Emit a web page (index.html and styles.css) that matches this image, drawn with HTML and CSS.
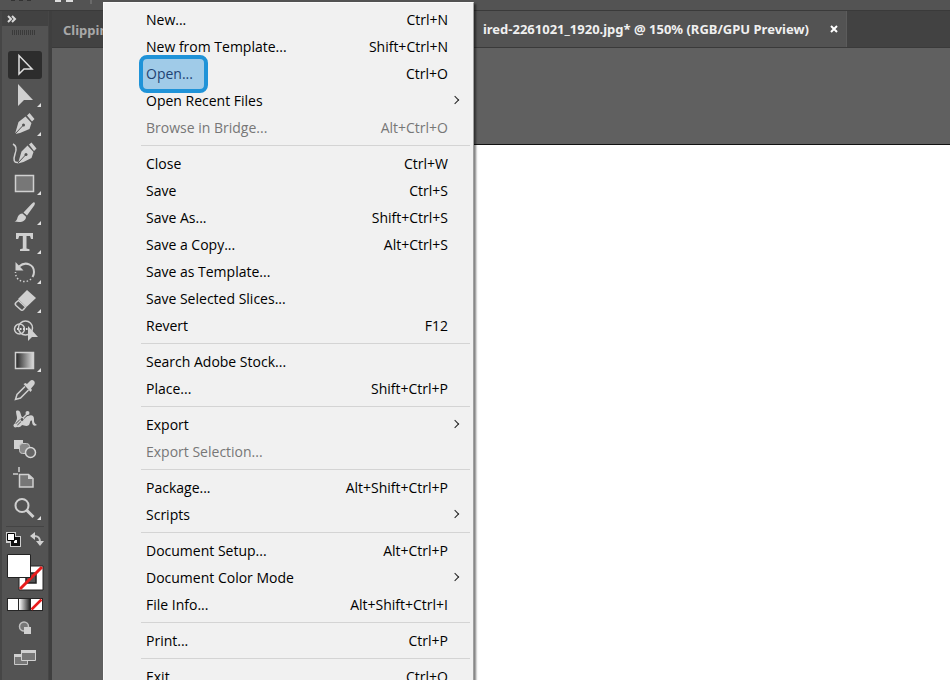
FILE: index.html
```html
<!DOCTYPE html>
<html lang="en">
<head>
	<meta charset="UTF-8">
	<meta name="viewport" content="width=device-width, initial-scale=1.0">
	<title>File menu</title>
	<link rel="stylesheet" href="styles.css">
</head>
<body>
	<header class="topbar">
		<svg class="topmarks" width="130" height="11" viewBox="0 0 130 11">
			<path d="M11 0h4M19 0h4M27 0h4" stroke="#333" stroke-width="2"/>
			<path d="M55 0h6v2h-6zM66 0h7v2h-7z" fill="#ddd"/>
			<path d="M91 0v4" stroke="#6a6a6a" stroke-width="2"/>
		</svg>
	</header>

	<div class="workspace">
		<aside class="toolbar">
			<button class="collapse" aria-label="Expand toolbar">
				<svg width="10" height="8" viewBox="0 0 10 8"><path d="M1 1l3 3-3 3M5 1l3 3-3 3" fill="none" stroke="#d8d8d8" stroke-width="2"/></svg>
			</button>
			<div class="grip"></div>

			<div class="tools">
				<button class="tool selected" aria-label="Selection">
					<svg viewBox="0 0 34 28"><path d="M11 4.500V23l5-5h8z" fill="none" stroke="#e0e0e0" stroke-width="1.500"/></svg>
				</button>
				<button class="tool more" aria-label="Direct selection">
					<svg viewBox="0 0 34 28"><path d="M10 3v22l6-6h9z" class="fill"/></svg>
				</button>
				<button class="tool more" aria-label="Pen">
					<svg viewBox="0 0 34 28"><path d="M19 5.500l2.500-2.500 5 6-2.500 2.500zM17.500 6.500l6 6.500-2 6-9.500 4-5 1 3.500-12z" class="fill"/><path d="M7 24l8-8.500" stroke="#535353"/><circle cx="15.500" cy="15" r="1.500" fill="#535353"/></svg>
				</button>
				<button class="tool" aria-label="Curvature">
					<svg viewBox="0 0 34 28"><path d="M21 4.500L23.500 2.500l5 6-2.500 2.500zM19.500 5.500l6 6.500-2 6-8 4-5.500 1.500 3.500-12z" class="fill"/><path d="M10 23l7.500-8" stroke="#535353"/><circle cx="18" cy="14.500" r="1.500" fill="#535353"/><path d="M5 4c4 2 4 5 2 10-2 6-1 9 3 8.500" class="line"/></svg>
				</button>
				<button class="tool more" aria-label="Rectangle">
					<svg viewBox="0 0 34 28"><path d="M7.500 6.500h18v16h-18z" fill="#777" stroke="#d0d0d0" stroke-width="1.500"/></svg>
				</button>
				<button class="tool more" aria-label="Paintbrush">
					<svg viewBox="0 0 34 28"><path d="M26.500 3.500c1 1 0 2.500-1 4l-6.500 9-3.500-3 8-8.500c1-1 2-2.500 3-1.500zM14.500 14.500l3.500 3.200c0 4-4 6.300-11.500 4.800 2-.5 2.500-2 3-4s2.500-4 5-4z" class="fill"/></svg>
				</button>
				<button class="tool more" aria-label="Type">
					<svg viewBox="0 0 34 28"><path d="M8 5h17v6h-2l-1-3h-3.500v12.500l3 .8V23H12v-1.700l2.800-.8V8H11.200l-1 3H8z" class="fill"/></svg>
				</button>
				<button class="tool more" aria-label="Rotate">
					<svg viewBox="0 0 34 28"><path d="M11 8.500c7-6 15-1.500 15 5.500 0 2-.5 3.500-1.500 5" fill="none" stroke="#d0d0d0" stroke-width="2"/><path d="M23 21c-4 4-11 3-13.500-.5C8 18.500 7.500 17 7.500 14" fill="none" stroke="#d0d0d0" stroke-width="1.500" stroke-dasharray="1.500 2"/><path d="M7.500 4v8.500h8z" class="fill"/></svg>
				</button>
				<button class="tool more" aria-label="Eraser">
					<svg viewBox="0 0 34 28"><path d="M19 3l9 8-9.500 9L10 12z" class="fill"/><path d="M10.500 13.500l7 6.500-2 2.500c-1 1-2 1-3 0L8 18.500c-1-1-1-2 0-3z" class="line"/></svg>
				</button>
				<button class="tool" aria-label="Shape builder">
					<svg viewBox="0 0 34 28"><circle cx="17.500" cy="11" r="7" class="line"/><circle cx="11.500" cy="12" r="5" class="line"/><path d="M9 12h11" fill="none" stroke="#ddd" stroke-width="2" stroke-dasharray="1.500 1.500"/><path d="M20 9v15l4-4h6z" class="fill"/></svg>
				</button>
				<button class="tool more" aria-label="Gradient">
					<svg viewBox="0 0 34 28"><defs><linearGradient id="ramp"><stop offset="0" stop-color="#222"/><stop offset="1" stop-color="#ddd"/></linearGradient></defs><path d="M7.500 6.500h18v16h-18z" fill="url(#ramp)" stroke="#d0d0d0" stroke-width="1.500"/></svg>
				</button>
				<button class="tool" aria-label="Eyedropper">
					<svg viewBox="0 0 34 28"><path d="M17 10.500l-8 8-1.500 5 5-1.500 8-8" class="line"/><path d="M15.500 8l2-1 1.500 1 3-3c1.500-1.500 3-1 4 0s1 2.500 0 4l-3 3.500 1 1.500-1.500 2z" class="fill"/></svg>
				</button>
				<button class="tool" aria-label="Puppet warp">
					<svg viewBox="0 0 34 28"><path d="M8 6c5-2 4 3 6 6 2 2 3-1 6-1 4-2 6 0 6 3s0 4 3 6c-4 2-5-1-5-4-2-2-2 3-3 4-3 2-5 0-7 0-2 3-6 3-7 0-1-2 2-4 2-7 0-2-1-4-1-7z" class="fill"/><path d="M8 20L20 8" stroke="#535353" stroke-width="3"/><path d="M7 21L20 8" class="line"/><circle cx="14" cy="14.500" r="2" fill="#535353" stroke="#d0d0d0"/><circle cx="7.500" cy="20.500" r="2" class="fill"/><circle cx="19.500" cy="8" r="2" class="fill"/></svg>
				</button>
				<button class="tool" aria-label="Blend">
					<svg viewBox="0 0 34 28"><path d="M6 5h9v9H6z" class="fill"/><rect x="11.500" y="8.500" width="10" height="10" rx="3" fill="#888" stroke="#c8c8c8"/><circle cx="22.500" cy="17.500" r="5" fill="#666" stroke="#d8d8d8" stroke-width="1.500"/></svg>
				</button>
				<button class="tool" aria-label="Artboard">
					<svg viewBox="0 0 34 28"><path d="M11 3v5M5 10h5" class="line"/><path d="M11.500 10.500h9l4.500 4v8.500H11.500z" fill="#777" stroke="#d0d0d0" stroke-width="1.500"/><path d="M20 10v5h5z" class="fill"/></svg>
				</button>
				<button class="tool more" aria-label="Zoom">
					<svg viewBox="0 0 34 28"><circle cx="14" cy="11.500" r="6.500" fill="none" stroke="#d0d0d0" stroke-width="2"/><path d="M18.500 16l7 7" stroke="#d0d0d0" stroke-width="3"/></svg>
				</button>
			</div>

			<div class="colors">
				<div class="color-row">
					<button aria-label="Default fill and stroke">
						<svg width="15" height="15" viewBox="0 0 15 15"><path d="M0 0h10v4h5v11H4v-4H0z" fill="#d0d0d0"/><path d="M5 5h9v9H5z" fill="#111"/><path d="M8 8h3v3H8z" fill="#fff"/><path d="M1.500 1.500h7v7h-7z" fill="#fff" stroke="#000"/></svg>
					</button>
					<button aria-label="Swap fill and stroke">
						<svg width="14" height="15" viewBox="0 0 14 15"><path d="M4 4c4 0 6 1 6 6" fill="none" stroke="#c8c8c8" stroke-width="2"/><path d="M0 4l5-4v8zM6 9h8l-4 5z" class="fill"/></svg>
					</button>
				</div>
				<button class="swatches" aria-label="Fill and stroke">
					<svg width="38" height="38" viewBox="0 0 38 38"><path d="M13 13h24v24H13z" fill="#fff" stroke="#222"/><path d="M20 20h10v10H20z" fill="#535353" stroke="#222" stroke-width="1.500"/><path d="M14 36l22-22" stroke="#e81c1c" stroke-width="3"/><path d="M1.500 1.500h23v23h-23z" fill="#fff" stroke="#222"/></svg>
				</button>
				<button class="modes" aria-label="Color, gradient, none">
					<svg width="36" height="13" viewBox="0 0 36 13"><defs><linearGradient id="fade"><stop offset="0" stop-color="#fff"/><stop offset="1" stop-color="#222"/></linearGradient></defs><path d="M0 0h36v13H0z" fill="#262626"/><path d="M1 1h10v11H1z" fill="#fff"/><path d="M12 1h11v11H12z" fill="url(#fade)"/><path d="M24 1h11v11H24z" fill="#fff"/><path d="M24.500 11.500l10-10" stroke="#e81c1c" stroke-width="2.500"/></svg>
				</button>
				<button class="drawmode" aria-label="Drawing mode">
					<svg width="14" height="14" viewBox="0 0 14 14"><circle cx="6" cy="5.500" r="4.500" fill="#777" stroke="#c0c0c0" stroke-width="1.500"/><path d="M6 6h7v7H6z" class="fill"/></svg>
				</button>
				<button class="screenmode" aria-label="Screen mode">
					<svg width="24" height="18" viewBox="0 0 24 18"><path d="M1.500 5.500h13v10h-13z" fill="#777" stroke="#c8c8c8"/><path d="M1 5h14v3H1z" class="fill"/><path d="M8.500 1.500h14v10h-14z" fill="#777" stroke="#d0d0d0"/><path d="M8 1h15v3H8z" class="fill"/></svg>
				</button>
			</div>
		</aside>

		<main class="document">
			<div class="tabs">
				<div class="tab">Clipping</div>
				<div class="tab active">
					<span>ired-2261021_1920.jpg* @ 150% (RGB/GPU Preview)</span>
					<button class="close" aria-label="Close tab">
						<svg width="8" height="8" viewBox="0 0 8 8"><path d="M1 1l6 6M7 1L1 7" stroke="#fff" stroke-width="2"/></svg>
					</button>
				</div>
			</div>
			<div class="canvas">
				<div class="artboard"></div>
			</div>
		</main>
	</div>

	<nav class="menu" aria-label="File">
		<button class="item"><span>New...</span><kbd>Ctrl+N</kbd></button>
		<button class="item"><span>New from Template...</span><kbd>Shift+Ctrl+N</kbd></button>
		<button class="item marked"><span>Open...</span><kbd>Ctrl+O</kbd></button>
		<button class="item sub"><span>Open Recent Files</span></button>
		<button class="item" disabled><span>Browse in Bridge...</span><kbd>Alt+Ctrl+O</kbd></button>
		<hr>
		<button class="item"><span>Close</span><kbd>Ctrl+W</kbd></button>
		<button class="item"><span>Save</span><kbd>Ctrl+S</kbd></button>
		<button class="item"><span>Save As...</span><kbd>Shift+Ctrl+S</kbd></button>
		<button class="item"><span>Save a Copy...</span><kbd>Alt+Ctrl+S</kbd></button>
		<button class="item"><span>Save as Template...</span></button>
		<button class="item"><span>Save Selected Slices...</span></button>
		<button class="item"><span>Revert</span><kbd>F12</kbd></button>
		<hr>
		<button class="item"><span>Search Adobe Stock...</span></button>
		<button class="item"><span>Place...</span><kbd>Shift+Ctrl+P</kbd></button>
		<hr>
		<button class="item sub"><span>Export</span></button>
		<button class="item" disabled><span>Export Selection...</span></button>
		<hr>
		<button class="item"><span>Package...</span><kbd>Alt+Shift+Ctrl+P</kbd></button>
		<button class="item sub"><span>Scripts</span></button>
		<hr>
		<button class="item"><span>Document Setup...</span><kbd>Alt+Ctrl+P</kbd></button>
		<button class="item sub"><span>Document Color Mode</span></button>
		<button class="item"><span>File Info...</span><kbd>Alt+Shift+Ctrl+I</kbd></button>
		<hr>
		<button class="item"><span>Print...</span><kbd>Ctrl+P</kbd></button>
		<hr>
		<button class="item"><span>Exit</span><kbd>Ctrl+Q</kbd></button>
	</nav>
</body>
</html>
```

FILE: styles.css
```css
*, *::before, *::after{
	box-sizing: border-box;
}
body{
	margin: 0;
	height: 100vh;
	overflow: hidden;
	display: flex;
	flex-direction: column;
	position: relative;
	background: #3f3f3f;
	font-family: "Open Sans", "Noto Sans", sans-serif;
	font-size: 14px;
}
button{
	padding: 0;
	border: 0;
	background: none;
	font: inherit;
	color: inherit;
}
svg{
	display: block;
}
.fill{
	fill: #d0d0d0;
}
.line{
	fill: none;
	stroke: #d0d0d0;
	stroke-width: 1.5;
}
.topbar{
	flex: none;
	height: 11px;
	background: #535353;
	border-bottom: 1px solid #3a3a3a;
}
.workspace{
	flex: 1;
	display: flex;
	gap: 3px;
	min-height: 0;
}

/* tools */
.toolbar{
	flex: none;
	width: 49px;
	background: #535353;
	border-left: 2px solid #464646;
	border-right: 1px solid #464646;
}
.collapse{
	display: block;
	width: 100%;
	height: 15px;
	padding-left: 5px;
	background: #424242;
}
.grip{
	width: 24px;
	height: 5px;
	margin: 4px 10px 16px;
	background: repeating-linear-gradient(to right, #3a3a3a 0 1px, #535353 1px 2px);
}
.tools{
	display: grid;
	grid-template-rows: repeat(8, 30px 29px);
	padding: 0 6px;
}
.tool{
	position: relative;
	width: 34px;
	height: 28px;
	border-radius: 3px;
}
.tool svg{
	width: 34px;
	height: 28px;
}
.selected{
	background: #2d2d2d;
}
.more::after{
	content: "";
	position: absolute;
	right: 1px;
	bottom: 2px;
	border-left: 4px solid transparent;
	border-bottom: 4px solid #e0e0e0;
}
.colors{
	margin: 3px 4px 0;
	padding-top: 5px;
	border-top: 1px solid #444;
	display: flex;
	flex-direction: column;
	align-items: center;
}
.color-row{
	width: 38px;
	display: flex;
	justify-content: space-between;
	margin-bottom: 6px;
}
.swatches{
	margin-bottom: 7px;
}
.modes{
	margin-bottom: 10px;
}
.drawmode{
	margin-bottom: 14px;
}

/* document */
.document{
	flex: 1;
	min-width: 0;
	display: flex;
	flex-direction: column;
}
.tabs{
	flex: none;
	display: flex;
	height: 37px;
	background: #424242;
	border-bottom: 1px solid #3a3a3a;
	color: #a8a8a8;
	font-family: "Noto Sans", "Open Sans", sans-serif;
	font-size: 13px;
	font-weight: bold;
	line-height: 38px;
	white-space: nowrap;
}
.tab{
	width: 395px;
	padding-left: 11px;
}
.active{
	width: 400px;
	display: flex;
	justify-content: flex-end;
	align-items: center;
	gap: 21px;
	padding: 0 8px 0 0;
	background: #535353;
	border-right: 1px solid #5c5c5c;
	color: #f0f0f0;
}
.canvas{
	flex: 1;
	padding-top: 96px;
	background: #606060;
	display: flex;
}
.artboard{
	flex: 1;
	margin-left: 200px;
	background: #fff;
	border-top: 1px solid #111;
}

/* file menu */
.menu{
	position: absolute;
	top: 2px;
	left: 103px;
	width: 371px;
	padding: 3px 3px 4px 37px;
	background: #f1f1f1;
	border: 1px solid #fafafa;
	border-right-color: #a0a0a0;
	box-shadow: 2px 2px 2px rgba(0, 0, 0, .5);
	color: #000;
}
.item{
	position: relative;
	display: flex;
	justify-content: space-between;
	align-items: center;
	width: 100%;
	height: 27px;
	padding: 0 22px 0 5px;
	line-height: 27px;
}
.item:disabled{
	color: #777;
}
kbd{
	font: inherit;
}
hr{
	height: 1px;
	margin: 4px 0;
	border: 0;
	background: #d4d4d4;
}
.sub::after{
	content: "";
	position: absolute;
	right: 12px;
	top: 10px;
	width: 6px;
	height: 6px;
	border: solid #222;
	border-width: 1px 1px 0 0;
	transform: rotate(45deg);
}
.marked::before{
	content: "";
	position: absolute;
	left: -2px;
	top: -5px;
	width: 69px;
	height: 38px;
	border: 4px solid #1f93d8;
	border-radius: 8px;
	background: #a0cbe8;
	z-index: 1;
}
.marked span{
	position: relative;
	z-index: 2;
	color: #1f4474;
}
```
